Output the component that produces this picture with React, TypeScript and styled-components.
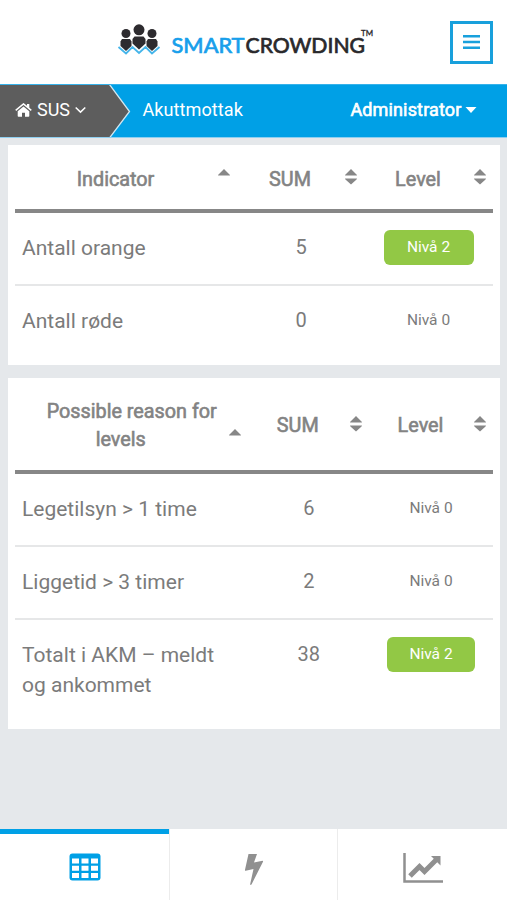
import React from 'react';
import styled, { createGlobalStyle } from 'styled-components';

const BLUE = '#00a0e6';
const GREY = '#878787';

const GlobalStyle = createGlobalStyle`
  * { box-sizing: border-box; }
  html, body { margin: 0; padding: 0; }
  body { font-family: Roboto, 'Liberation Sans', sans-serif; color: #7b7b7b; background: #e5e8eb; }
`;

const Page = styled.div`
  display: flex;
  flex-direction: column;
  width: 507px;
  height: 900px;
  overflow: hidden;
  background: #e5e8eb;
`;

const Header = styled.header`
  display: flex;
  flex: 0 0 84px;
  justify-content: space-between;
  padding: 21px 14px 0 117px;
  background: #fff;
`;

const MenuButton = styled.button`
  display: flex;
  align-items: center;
  justify-content: center;
  width: 43px;
  height: 43px;
  padding: 0 0 2px;
  border: 3px solid #18a0dc;
  background: #fff;
`;

const Bar = styled.nav`
  display: flex;
  flex: 0 0 54px;
  background: ${BLUE};
  border-top: 1px solid #36b2ea;
  border-bottom: 1px solid #8fcff0;
  color: #fff;
  font-size: 18px;
  line-height: 49px;
`;

const Home = styled.div`
  display: grid;
  width: 131px;
  height: 52px;
  > * { grid-area: 1 / 1; }
`;

const HomeLabel = styled.div`
  display: flex;
  align-items: center;
  gap: 5px;
  height: 49px;
  padding-left: 15px;
  z-index: 1;
`;

const Crumb = styled.div<{ $user?: boolean }>`
  display: flex;
  align-items: center;
  gap: 3px;
  height: 49px;
  padding-left: ${p => (p.$user ? 0 : '11.5px')};
  margin-left: ${p => (p.$user ? 'auto' : 0)};
  margin-right: ${p => (p.$user ? '30.5px' : 0)};
  font-size: ${p => (p.$user ? '18px' : '18.1px')};
  letter-spacing: ${p => (p.$user ? '.15px' : '.05px')};
  -webkit-text-stroke: ${p => (p.$user ? '.6px #fff' : '0')};
`;

const Main = styled.main`
  display: flex;
  flex: 1;
  flex-direction: column;
  gap: 13px;
  padding: 7px 7px 0 8px;
`;

const Card = styled.section<{ $height: number }>`
  height: ${p => p.$height}px;
  padding: 0 7px;
  background: #fff;
`;

const Row = styled.div<{ $cols: string; $height: number; $line?: boolean }>`
  display: grid;
  grid-template-columns: ${p => p.$cols};
  height: ${p => p.$height}px;
  border-bottom: ${p => (p.$line ? '2px solid #e6e7e8' : '0')};
`;

const HeadRow = styled(Row)`
  border-bottom: 4px solid ${GREY};
`;

const HeadCell = styled.div`
  display: grid;
  grid-template-columns: 1fr 14px;
  align-items: center;
  padding: 5.5px 6px 0 8px;
  color: #838383;
  font-size: 19.8px;
  -webkit-text-stroke: .6px #838383;
  line-height: 28px;
  text-align: center;
`;

const HeadText = styled.span`
  padding-right: 9px;
  white-space: nowrap;
`;

const FirstLine = styled.span`
  display: block;
  padding-left: 22px;
`;

const SortIcon = styled.svg<{ $drop?: boolean }>`
  margin-top: ${p => (p.$drop ? '22px' : '-5px')};
`;

const NameCell = styled.div`
  padding: 20px 0 0 7px;
  font-size: 21px;
  line-height: 30px;
`;

const SumCell = styled.div`
  padding-top: 19px;
  padding-left: 1px;
  font-size: 20px;
  line-height: 30px;
  text-align: center;
`;

const LevelCell = styled.div`
  padding-top: 17px;
  display: flex;
  justify-content: center;
`;

const Level = styled.span<{ $active?: boolean; $width: number }>`
  width: ${p => p.$width}px;
  height: 35px;
  border-radius: 6px;
  background: ${p => (p.$active ? '#92c845' : 'transparent')};
  color: ${p => (p.$active ? '#fff' : '#7b7b7b')};
  font-size: 15.5px;
  line-height: 35px;
  text-align: center;
`;

const Tabs = styled.footer`
  display: grid;
  grid-template-columns: 169px 168px 170px;
  flex: 0 0 71px;
  background: #fff;
`;

const Tab = styled.div<{ $active?: boolean }>`
  display: flex;
  justify-content: center;
  align-items: flex-start;
  padding-top: ${p => (p.$active ? '19px' : '24px')};
  border-top: ${p => (p.$active ? `5px solid ${BLUE}` : '0')};
  border-left: ${p => (p.$active ? '0' : '1px solid #ececec')};
`;

const Logo = () => (
  <svg width="262" height="40" viewBox="117 21 262 40">
    <path d="M118.500 47l7.500 6.500 6.500-6.500 6.500 6 6.500-6 6.500 6.500 7.500-6.500" fill="none" stroke="#45b5ea" strokeWidth="1.800" />
    <g fill="#2d2b2f">
      <circle cx="126" cy="33.500" r="4.500" />
      <circle cx="152" cy="33.500" r="4.500" />
      <path d="M122 39h8l1.500 2.500V46l-5.500 5-5.500-5v-4.500z" />
      <path d="M148 39h8l1.500 2.500V46l-5.500 5-5.500-5v-4.500z" />
      <circle cx="139" cy="29.800" r="5.500" />
      <path d="M134.500 36.500h9l2 2.500v4.500l-6.500 6-6.500-6V39z" />
    </g>
    <g fontFamily="Lato, sans-serif" fontSize="20.500" fontWeight="400" strokeWidth=".7">
      <text x="171.500" y="52.500" textLength="73" lengthAdjust="spacingAndGlyphs" fill="#189feb" stroke="#189feb">SMART</text>
      <text x="245.500" y="52.500" textLength="119.500" lengthAdjust="spacingAndGlyphs" fill="#29282b" stroke="#29282b">CROWDING</text>
      <text x="361" y="35.500" fontSize="8" textLength="12" lengthAdjust="spacingAndGlyphs" fill="#29282b" stroke="#29282b" strokeWidth=".3">TM</text>
    </g>
  </svg>
);

const Sort = ({ asc, drop }: { asc?: boolean; drop?: boolean }) => (
  <SortIcon $drop={drop} width="14" height="18" viewBox="0 0 14 18" fill={GREY}>
    <path d="M1 7.500Q1 6.800 2 6L7 1l5 5q1 .8 1 1.500z" />
    {!asc && <path d="M1 10.500q0 .7 1 1.500l5 4.500 5-4.500q1-.8 1-1.500z" />}
  </SortIcon>
);

type Item = { name: React.ReactNode; sum: number; level: number; height: number };
type TableProps = { title: React.ReactNode; cols: string; height: number; head: number; badge: number; drop?: boolean; items: Item[] };

const Table = ({ title, cols, height, head, badge, drop, items }: TableProps) => (
  <Card $height={height}>
    <HeadRow $cols={cols} $height={head}>
      <HeadCell><HeadText>{title}</HeadText><Sort asc drop={drop} /></HeadCell>
      <HeadCell><HeadText>SUM</HeadText><Sort /></HeadCell>
      <HeadCell><HeadText>Level</HeadText><Sort /></HeadCell>
    </HeadRow>
    {items.map((item, i) => (
      <Row key={i} $cols={cols} $height={item.height} $line={i < items.length - 1}>
        <NameCell>{item.name}</NameCell>
        <SumCell>{item.sum}</SumCell>
        <LevelCell><Level $active={item.level > 0} $width={badge}>Nivå {item.level}</Level></LevelCell>
      </Row>
    ))}
  </Card>
);

export default function App() {
  return (
    <>
      <GlobalStyle />
      <Page>
        <Header>
          <Logo />
          <MenuButton aria-label="Menu">
            <svg width="18" height="16" viewBox="0 0 18 16" fill="#18a0dc">
              <path d="M0 1h17v2.500H0zM0 6.800h17v2.500H0zM0 12.500h17V15H0z" />
            </svg>
          </MenuButton>
        </Header>
        <Bar>
          <Home>
            <svg width="131" height="52" viewBox="0 0 131 52">
              <path d="M0 0h110l19.500 26.500L110 52H0z" fill="#5d5d5d" />
              <path d="M109.500-.5l20 27L109.500 53" fill="none" stroke="#d3e8f2" strokeWidth="1.300" />
            </svg>
            <HomeLabel>
              <svg width="17" height="14" viewBox="0 0 17 14" fill="#fff">
                <path d="M8.500 3.500L14.300 8.300V13q0 .8-.8.800H10V9.700H7v4.100H3.500q-.8 0-.8-.8V8.300z" />
                <path d="M.7 7.300L8.500.9l7.800 6.400" fill="none" stroke="#fff" strokeWidth="1.500" />
                <path d="M12 1h2.300v4.500L12 3.600z" />
              </svg>
              <span>SUS</span>
              <svg width="11" height="8" viewBox="0 0 11 8" fill="none" stroke="#fff" strokeWidth="1.500">
                <path d="M.7 1.500l4.800 4.600 4.800-4.600" />
              </svg>
            </HomeLabel>
          </Home>
          <Crumb>Akuttmottak</Crumb>
          <Crumb $user>
            Administrator
            <svg width="12" height="8" viewBox="0 0 12 8" fill="#fff"><path d="M.5 1h11L6 7z" /></svg>
          </Crumb>
        </Bar>
        <Main>
          <Table
            title="Indicator" cols="222px 127px 129px" height={219.5} head={67.5} badge={90}
            items={[
              { name: 'Antall orange', sum: 5, level: 2, height: 73 },
              { name: 'Antall røde', sum: 0, level: 0, height: 73 },
            ]}
          />
          <Table
            title={<><FirstLine>Possible reason for</FirstLine>levels</>}
            cols="232.5px 121.5px 124px" height={351} head={96} badge={88} drop
            items={[
              { name: 'Legetilsyn > 1 time', sum: 6, level: 0, height: 73 },
              { name: 'Liggetid > 3 timer', sum: 2, level: 0, height: 73 },
              { name: <>Totalt i AKM – meldt<br />og ankommet</>, sum: 38, level: 2, height: 100 },
            ]}
          />
        </Main>
        <Tabs>
          <Tab $active>
            <svg width="32" height="28" viewBox="0 0 32 28">
              <rect x=".5" y=".5" width="31" height="27" rx="3" fill={BLUE} />
              <path d="M3 5.500h7v5H3zM12.500 5.500h7v5h-7zM22 5.500h7v5h-7zM3 12.800h7v5H3zM12.500 12.800h7v5h-7zM22 12.800h7v5h-7zM3 20h7v5H3zM12.500 20h7v5h-7zM22 20h7v5h-7z" fill="#fff" />
            </svg>
          </Tab>
          <Tab>
            <svg width="20" height="34" viewBox="0 0 20 34" fill="#909090">
              <path d="M4.500 1h8.500L10 9.500l8.500-1.800q.8 0 .5 1L7.500 31.500q-1.500 1-1.300-.5L9.500 16 1.700 17.800q-.9 0-.7-1z" />
            </svg>
          </Tab>
          <Tab>
            <svg width="40" height="31" viewBox="0 0 40 31" fill="none" stroke="#909090">
              <path d="M1.500 0v28.500H40" strokeWidth="2.500" />
              <path d="M7 23l9.500-9.500 5 5L33 7" strokeWidth="5" />
              <path d="M28 3h9.500v9.500z" fill="#909090" stroke="none" />
            </svg>
          </Tab>
        </Tabs>
      </Page>
    </>
  );
}
